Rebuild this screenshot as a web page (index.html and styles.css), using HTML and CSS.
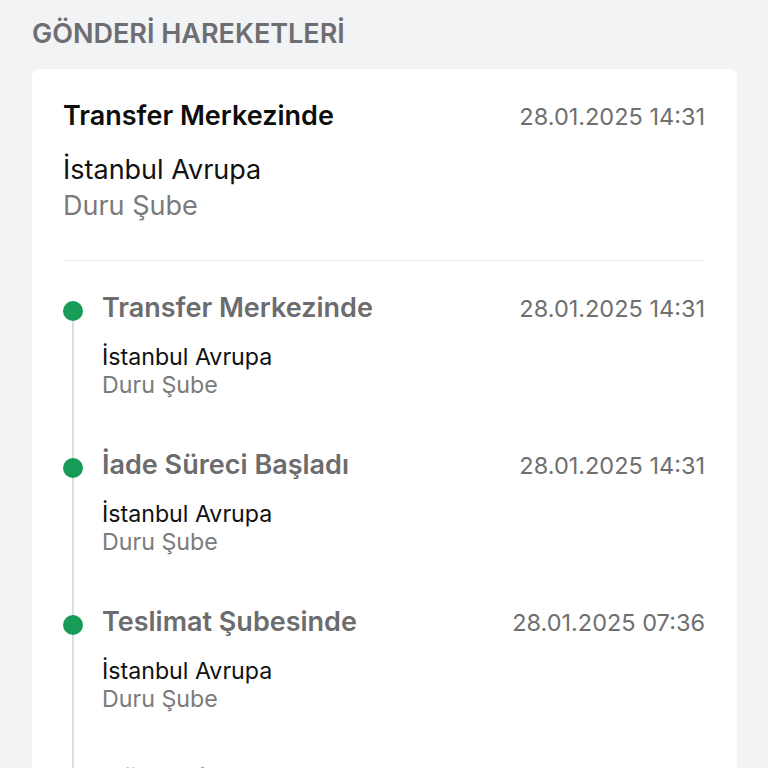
FILE: index.html
```html
<!DOCTYPE html>
<html lang="tr">
<head>
<meta charset="utf-8">
<title>Gönderi Hareketleri</title>
<link rel="stylesheet" href="styles.css">
</head>
<body>
<main class="page">
  <h2 class="section-title">GÖNDERİ HAREKETLERİ</h2>
  <section class="card">
    <div class="summary">
      <div class="row">
        <span class="summary-title">Transfer Merkezinde</span>
        <span class="date">28.01.2025 14:31</span>
      </div>
      <div class="summary-place">İstanbul Avrupa</div>
      <div class="summary-branch">Duru Şube</div>
    </div>
    <div class="divider"></div>
    <ol class="timeline">
      <li class="event">
        <span class="dot"></span>
        <div class="event-body">
          <div class="row">
            <span class="event-title">Transfer Merkezinde</span>
            <span class="date">28.01.2025 14:31</span>
          </div>
          <div class="event-place">İstanbul Avrupa</div>
          <div class="event-branch">Duru Şube</div>
        </div>
      </li>
      <li class="event">
        <span class="dot"></span>
        <div class="event-body">
          <div class="row">
            <span class="event-title">İade Süreci Başladı</span>
            <span class="date">28.01.2025 14:31</span>
          </div>
          <div class="event-place">İstanbul Avrupa</div>
          <div class="event-branch">Duru Şube</div>
        </div>
      </li>
      <li class="event">
        <span class="dot"></span>
        <div class="event-body">
          <div class="row">
            <span class="event-title">Teslimat Şubesinde</span>
            <span class="date">28.01.2025 07:36</span>
          </div>
          <div class="event-place">İstanbul Avrupa</div>
          <div class="event-branch">Duru Şube</div>
        </div>
      </li>
      <li class="event">
        <span class="dot"></span>
        <div class="event-body">
          <div class="row">
            <span class="event-title">Gönderi Yolda</span>
            <span class="date">28.01.2025 05:09</span>
          </div>
          <div class="event-place">İstanbul Avrupa</div>
          <div class="event-branch">Duru Şube</div>
        </div>
      </li>
    </ol>
  </section>
</main>
</body>
</html>
```
FILE: styles.css
```css
* { box-sizing: border-box; }
html, body { margin: 0; padding: 0; }
body {
  background: #f2f3f5;
  font-family: Inter, "Noto Sans", sans-serif;
  color: #111;
  height: 768px;
  overflow: hidden;
}
.page {
  padding: 17px 31px 0 32px;
}
.section-title {
  margin: 0 0 18px 0;
  font-size: 27px;
  line-height: 34px;
  font-weight: 600;
  color: #6e6e72;
  letter-spacing: 0;
}
.card {
  background: #fff;
  border-radius: 8px;
  padding: 31px 32px 0 31px;
}
.row {
  display: flex;
  justify-content: space-between;
  align-items: baseline;
}
.summary-title {
  font-size: 27px;
  line-height: 32px;
  font-weight: 600;
  color: #0d0d0d;
}
.date {
  font-size: 23.5px;
  line-height: 32px;
  color: #6f6f6f;
}
.summary-place {
  margin-top: 22px;
  font-size: 27px;
  line-height: 30px;
  color: #111;
}
.summary-branch {
  margin-top: 6px;
  font-size: 27px;
  line-height: 30px;
  color: #7b7b7b;
}
.divider {
  height: 1px;
  background: #ededed;
  margin-top: 39px;
}
.timeline {
  list-style: none;
  margin: 0;
  padding: 31px 0 0 0;
}
.event {
  position: relative;
  display: flex;
  gap: 19px;
  padding-bottom: 50px;
}
.event::before {
  content: "";
  position: absolute;
  left: 9.25px;
  top: 18px;
  bottom: -18px;
  width: 1.5px;
  background: #dcdcdc;
}
.dot {
  position: relative;
  flex: none;
  width: 20px;
  height: 20px;
  margin-top: 9px;
  border-radius: 50%;
  background: #179c58;
}
.event-body { flex: 1; }
.event-title {
  font-size: 27px;
  line-height: 32px;
  font-weight: 600;
  color: #6c6c6e;
}
.event-place {
  margin-top: 18px;
  font-size: 23.2px;
  line-height: 28px;
  color: #111;
}
.event-branch {
  font-size: 23.2px;
  line-height: 28px;
  color: #7b7b7b;
}
```
